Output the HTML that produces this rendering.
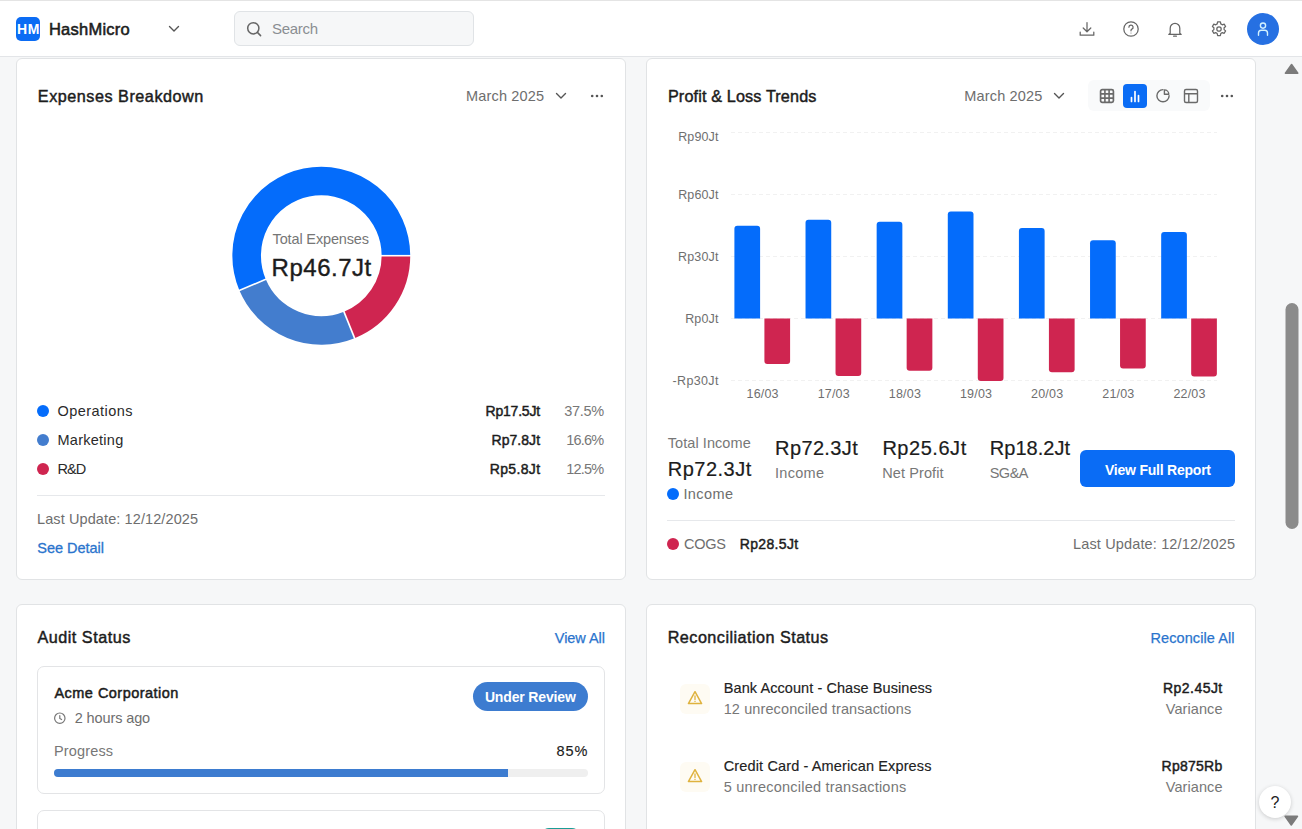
<!DOCTYPE html>
<html><head><meta charset="utf-8"><style>
html,body{margin:0;padding:0}
body{width:1302px;height:829px;overflow:hidden;position:relative;background:#f6f7f8;font-family:"Liberation Sans",sans-serif}
.t{position:absolute;white-space:nowrap}
</style></head><body>
<div style="position:absolute;left:0;top:0;width:1302px;height:56px;background:#fff;border-top:1px solid #e4e4e4;box-sizing:border-box"></div>
<div style="position:absolute;left:0;top:56px;width:1302px;height:1px;background:#e3e5e8"></div>
<div style="position:absolute;left:16px;top:17px;width:24px;height:24px;border-radius:5px;background:#0b6cf4"></div>
<div class="t" style="left:16.90px;top:21.25px;font-size:14px;line-height:17px;color:#fff;letter-spacing:0.750px;font-weight:700;">HM</div>
<div class="t" style="left:48.88px;top:19.38px;font-size:16.5px;line-height:20px;color:#1c1c1c;letter-spacing:0.250px;-webkit-text-stroke:0.55px #1c1c1c;">HashMicro</div>
<svg style="position:absolute;left:166px;top:22px" width="16" height="14"><polyline points="3.5,4.5 8,9 12.5,4.5" fill="none" stroke="#555" stroke-width="1.4" stroke-linecap="round" stroke-linejoin="round"/></svg>
<div style="position:absolute;left:234px;top:11px;width:240px;height:35px;border-radius:6px;background:#f6f7f8;border:1px solid #e0e3e6;box-sizing:border-box"></div>
<svg style="position:absolute;left:244px;top:19px" width="20" height="20"><circle cx="9.3" cy="9.3" r="5.6" fill="none" stroke="#666" stroke-width="1.5"/><line x1="13.4" y1="13.4" x2="16.6" y2="16.6" stroke="#666" stroke-width="1.5" stroke-linecap="round"/></svg>
<div class="t" style="left:272.00px;top:20.40px;font-size:15px;line-height:18px;color:#8a8e92;letter-spacing:-0.310px;">Search</div>
<svg style="position:absolute;left:1077px;top:19px" width="20" height="20"><path d="M10 3.5v9M6.2 9l3.8 3.8L13.8 9M3.2 13v3.2h13.6V13" fill="none" stroke="#666" stroke-width="1.25" stroke-linecap="round" stroke-linejoin="round"/></svg>
<svg style="position:absolute;left:1121px;top:19px" width="20" height="20"><circle cx="10" cy="10" r="7.2" fill="none" stroke="#666" stroke-width="1.25" stroke-linecap="round" stroke-linejoin="round"/><path d="M7.9 8.2a2.1 2.1 0 1 1 3 1.9c-.6.3-.9.8-.9 1.4v.3" fill="none" stroke="#666" stroke-width="1.25" stroke-linecap="round" stroke-linejoin="round"/><circle cx="10" cy="13.9" r=".5" fill="#666"/></svg>
<svg style="position:absolute;left:1165px;top:19px" width="20" height="20"><path d="M5.2 14.2V9.2a4.8 4.8 0 0 1 9.6 0v5l1.4 1.2H3.8z" fill="none" stroke="#666" stroke-width="1.25" stroke-linecap="round" stroke-linejoin="round"/><path d="M8.6 17.2h2.8" fill="none" stroke="#666" stroke-width="1.25" stroke-linecap="round" stroke-linejoin="round"/></svg>
<svg style="position:absolute;left:1209px;top:19px" width="20" height="20"><path d="M8.6 2.9h2.8l.4 2 1.5.9 1.9-.7 1.4 2.4-1.5 1.3v1.8l1.5 1.3-1.4 2.4-1.9-.7-1.5.9-.4 2H8.6l-.4-2-1.5-.9-1.9.7-1.4-2.4 1.5-1.3V8.8L3.4 7.5l1.4-2.4 1.9.7 1.5-.9z" fill="none" stroke="#666" stroke-width="1.25" stroke-linecap="round" stroke-linejoin="round"/><circle cx="10" cy="10" r="2.2" fill="none" stroke="#666" stroke-width="1.25" stroke-linecap="round" stroke-linejoin="round"/></svg>
<div style="position:absolute;left:1247px;top:13px;width:32px;height:32px;border-radius:50%;background:#2670e2"></div>
<svg style="position:absolute;left:1253px;top:19px" width="20" height="20"><circle cx="10" cy="6.6" r="2.6" fill="none" stroke="#d2f1ff" stroke-width="1.4"/><path d="M5.5 16.3v-2.3a2.8 2.8 0 0 1 2.8-2.8h3.4a2.8 2.8 0 0 1 2.8 2.8v2.3" fill="none" stroke="#d2f1ff" stroke-width="1.4" stroke-linecap="round"/></svg>
<div style="position:absolute;background:#fff;border:1px solid #e1e3e5;border-radius:6px;box-sizing:border-box;left:16px;top:58px;width:610px;height:522px"></div>
<div style="position:absolute;background:#fff;border:1px solid #e1e3e5;border-radius:6px;box-sizing:border-box;left:646px;top:58px;width:610px;height:522px"></div>
<div style="position:absolute;background:#fff;border:1px solid #e1e3e5;border-radius:6px;box-sizing:border-box;left:16px;top:604px;width:610px;height:300px"></div>
<div style="position:absolute;background:#fff;border:1px solid #e1e3e5;border-radius:6px;box-sizing:border-box;left:646px;top:604px;width:610px;height:300px"></div>
<div class="t" style="left:37.83px;top:87.18px;font-size:16.2px;line-height:19px;color:#1c1c1c;letter-spacing:0.521px;-webkit-text-stroke:0.45px #1c1c1c;">Expenses Breakdown</div>
<div class="t" style="left:466.10px;top:87.77px;font-size:14.5px;line-height:17px;color:#6e6e6e;letter-spacing:0.161px;">March 2025</div>
<svg style="position:absolute;left:553px;top:88px" width="16" height="14"><polyline points="3.5,5.6 8,10.1 12.5,5.6" fill="none" stroke="#555" stroke-width="1.4" stroke-linecap="round" stroke-linejoin="round"/></svg>
<svg style="position:absolute;left:589px;top:89px" width="16" height="14"><circle cx="3.2" cy="7" r="1.3" fill="#555"/><circle cx="8" cy="7" r="1.3" fill="#555"/><circle cx="12.8" cy="7" r="1.3" fill="#555"/></svg>
<svg style="position:absolute;left:216px;top:141px" width="210" height="230"><path d="M179.95 114.70 A74.65 74.65 0 0 1 133.26 183.91" fill="none" stroke="#cf2550" stroke-width="28.6"/><path d="M133.26 183.91 A74.65 74.65 0 0 1 36.58 143.87" fill="none" stroke="#437dce" stroke-width="28.6"/><path d="M36.58 143.87 A74.65 74.65 0 1 1 179.95 114.70" fill="none" stroke="#046cfb" stroke-width="28.6"/><line x1="164.30" y1="114.70" x2="195.80" y2="114.70" stroke="#fff" stroke-width="1.6"/><line x1="127.40" y1="169.40" x2="139.20" y2="198.61" stroke="#fff" stroke-width="1.6"/><line x1="50.99" y1="137.75" x2="21.99" y2="150.06" stroke="#fff" stroke-width="1.6"/></svg>
<div class="t" style="left:272.55px;top:231.37px;font-size:14.5px;line-height:17px;color:#767676;letter-spacing:-0.142px;">Total Expenses</div>
<div class="t" style="left:271.60px;top:253.38px;font-size:24px;line-height:29px;color:#1c1c1c;letter-spacing:0.507px;-webkit-text-stroke:0.4px #1c1c1c;">Rp46.7Jt</div>
<div style="position:absolute;left:36.8px;top:405.0px;width:12px;height:12px;border-radius:50%;background:#046cfb"></div>
<div class="t" style="left:57.50px;top:403.07px;font-size:14.5px;line-height:17px;color:#2a2a2a;letter-spacing:0.450px;">Operations</div>
<div class="t" style="left:485.52px;top:403.25px;font-size:14px;line-height:17px;color:#1c1c1c;letter-spacing:-0.214px;-webkit-text-stroke:0.45px #1c1c1c;">Rp17.5Jt</div>
<div class="t" style="left:564.20px;top:403.07px;font-size:14.5px;line-height:17px;color:#777;letter-spacing:-0.275px;">37.5%</div>
<div style="position:absolute;left:36.8px;top:434.0px;width:12px;height:12px;border-radius:50%;background:#437dce"></div>
<div class="t" style="left:57.50px;top:432.07px;font-size:14.5px;line-height:17px;color:#2a2a2a;letter-spacing:0.256px;">Marketing</div>
<div class="t" style="left:491.52px;top:432.25px;font-size:14px;line-height:17px;color:#1c1c1c;letter-spacing:0.050px;-webkit-text-stroke:0.45px #1c1c1c;">Rp7.8Jt</div>
<div class="t" style="left:566.20px;top:432.07px;font-size:14.5px;line-height:17px;color:#777;letter-spacing:-0.775px;">16.6%</div>
<div style="position:absolute;left:36.8px;top:463.0px;width:12px;height:12px;border-radius:50%;background:#cf2550"></div>
<div class="t" style="left:57.50px;top:461.07px;font-size:14.5px;line-height:17px;color:#2a2a2a;letter-spacing:-0.900px;">R&amp;D</div>
<div class="t" style="left:489.82px;top:461.25px;font-size:14px;line-height:17px;color:#1c1c1c;letter-spacing:0.333px;-webkit-text-stroke:0.45px #1c1c1c;">Rp5.8Jt</div>
<div class="t" style="left:566.20px;top:461.07px;font-size:14.5px;line-height:17px;color:#777;letter-spacing:-0.775px;">12.5%</div>
<div style="position:absolute;left:37px;top:495px;width:568px;height:1px;background:#e6e8eb"></div>
<div class="t" style="left:37.00px;top:511.47px;font-size:14.5px;line-height:17px;color:#6e6e6e;letter-spacing:0.100px;">Last Update: 12/12/2025</div>
<div class="t" style="left:37.35px;top:540.07px;font-size:14.5px;line-height:17px;color:#2a74cd;letter-spacing:-0.022px;-webkit-text-stroke:0.3px #2a74cd;">See Detail</div>
<div class="t" style="left:667.93px;top:87.18px;font-size:16.2px;line-height:19px;color:#1c1c1c;letter-spacing:0.142px;-webkit-text-stroke:0.45px #1c1c1c;">Profit &amp; Loss Trends</div>
<div class="t" style="left:964.30px;top:87.77px;font-size:14.5px;line-height:17px;color:#6e6e6e;letter-spacing:0.161px;">March 2025</div>
<svg style="position:absolute;left:1051px;top:88px" width="16" height="14"><polyline points="3.5,5.6 8,10.1 12.5,5.6" fill="none" stroke="#555" stroke-width="1.4" stroke-linecap="round" stroke-linejoin="round"/></svg>
<div style="position:absolute;left:1088px;top:80px;width:122px;height:31px;border-radius:6px;background:#f9fafb"></div>
<div style="position:absolute;left:1123px;top:84px;width:24px;height:24px;border-radius:4px;background:#0a6cf5"></div>
<svg style="position:absolute;left:1097px;top:86px" width="20" height="20"><rect x="3.6" y="3.6" width="12.8" height="12.8" rx="1.6" fill="none" stroke="#6a6a6a" stroke-width="1.7"/><path d="M7.9 3.6v12.8M12.1 3.6v12.8M3.6 7.9h12.8M3.6 12.1h12.8" fill="none" stroke="#6a6a6a" stroke-width="1.6"/></svg>
<svg style="position:absolute;left:1125px;top:86px" width="20" height="20"><path d="M6.5 15.5v-4M10 15.5V5.5M13.5 15.5v-6" fill="none" stroke="#fff" stroke-width="1.7" stroke-linecap="round"/></svg>
<svg style="position:absolute;left:1153px;top:86px" width="20" height="20"><path d="M10 3.6A6.1 6.1 0 1 0 16.1 9.7" fill="none" stroke="#6a6a6a" stroke-width="1.4" stroke-linecap="round"/><path d="M11.4 8.3V3.9A4.4 4.4 0 0 1 15.8 8.3Z" fill="none" stroke="#6a6a6a" stroke-width="1.4" stroke-linejoin="round"/></svg>
<svg style="position:absolute;left:1181px;top:86px" width="20" height="20"><rect x="3.5" y="3.5" width="13" height="13" rx="1.5" fill="none" stroke="#6a6a6a" stroke-width="1.4"/><path d="M3.5 7.8h13M7.8 7.8v8.7" fill="none" stroke="#6a6a6a" stroke-width="1.4"/></svg>
<svg style="position:absolute;left:1219px;top:89px" width="16" height="14"><circle cx="3.2" cy="7" r="1.3" fill="#555"/><circle cx="8" cy="7" r="1.3" fill="#555"/><circle cx="12.8" cy="7" r="1.3" fill="#555"/></svg>
<svg style="position:absolute;left:646px;top:120px" width="610" height="300"><line x1="85" y1="12.5" x2="571" y2="12.5" stroke="#f1f1f1" stroke-width="1" stroke-dasharray="4 3"/><line x1="85" y1="74.5" x2="571" y2="74.5" stroke="#f1f1f1" stroke-width="1" stroke-dasharray="4 3"/><line x1="85" y1="136.5" x2="571" y2="136.5" stroke="#f1f1f1" stroke-width="1" stroke-dasharray="4 3"/><line x1="85" y1="198.5" x2="571" y2="198.5" stroke="#f1f1f1" stroke-width="1" stroke-dasharray="4 3"/><line x1="85" y1="260.5" x2="571" y2="260.5" stroke="#f1f1f1" stroke-width="1" stroke-dasharray="4 3"/><path d="M88.39999999999998 198.60000000000002 V108.80000000000001 Q88.39999999999998 105.80000000000001 91.39999999999998 105.80000000000001 H111.09999999999998 Q114.09999999999998 105.80000000000001 114.09999999999998 108.80000000000001 V198.60000000000002 Z" fill="#046cfb"/><path d="M118.39999999999998 198.60000000000002 V241 Q118.39999999999998 244 121.39999999999998 244 H141.09999999999997 Q144.09999999999997 244 144.09999999999997 241 V198.60000000000002 Z" fill="#cf2550"/><path d="M159.52999999999997 198.60000000000002 V102.80000000000001 Q159.52999999999997 99.80000000000001 162.52999999999997 99.80000000000001 H182.22999999999996 Q185.22999999999996 99.80000000000001 185.22999999999996 102.80000000000001 V198.60000000000002 Z" fill="#046cfb"/><path d="M189.52999999999997 198.60000000000002 V253 Q189.52999999999997 256 192.52999999999997 256 H212.22999999999996 Q215.22999999999996 256 215.22999999999996 253 V198.60000000000002 Z" fill="#cf2550"/><path d="M230.65999999999997 198.60000000000002 V104.80000000000001 Q230.65999999999997 101.80000000000001 233.65999999999997 101.80000000000001 H253.35999999999996 Q256.35999999999996 101.80000000000001 256.35999999999996 104.80000000000001 V198.60000000000002 Z" fill="#046cfb"/><path d="M260.65999999999997 198.60000000000002 V247.7 Q260.65999999999997 250.7 263.65999999999997 250.7 H283.35999999999996 Q286.35999999999996 250.7 286.35999999999996 247.7 V198.60000000000002 Z" fill="#cf2550"/><path d="M301.78999999999996 198.60000000000002 V94.5 Q301.78999999999996 91.5 304.78999999999996 91.5 H324.48999999999995 Q327.48999999999995 91.5 327.48999999999995 94.5 V198.60000000000002 Z" fill="#046cfb"/><path d="M331.78999999999996 198.60000000000002 V258 Q331.78999999999996 261 334.78999999999996 261 H354.48999999999995 Q357.48999999999995 261 357.48999999999995 258 V198.60000000000002 Z" fill="#cf2550"/><path d="M372.91999999999996 198.60000000000002 V111 Q372.91999999999996 108 375.91999999999996 108 H395.61999999999995 Q398.61999999999995 108 398.61999999999995 111 V198.60000000000002 Z" fill="#046cfb"/><path d="M402.91999999999996 198.60000000000002 V249.3 Q402.91999999999996 252.3 405.91999999999996 252.3 H425.61999999999995 Q428.61999999999995 252.3 428.61999999999995 249.3 V198.60000000000002 Z" fill="#cf2550"/><path d="M444.04999999999995 198.60000000000002 V123.30000000000001 Q444.04999999999995 120.30000000000001 447.04999999999995 120.30000000000001 H466.74999999999994 Q469.74999999999994 120.30000000000001 469.74999999999994 123.30000000000001 V198.60000000000002 Z" fill="#046cfb"/><path d="M474.04999999999995 198.60000000000002 V245.39999999999998 Q474.04999999999995 248.39999999999998 477.04999999999995 248.39999999999998 H496.74999999999994 Q499.74999999999994 248.39999999999998 499.74999999999994 245.39999999999998 V198.60000000000002 Z" fill="#cf2550"/><path d="M515.1799999999998 198.60000000000002 V115 Q515.1799999999998 112 518.1799999999998 112 H537.8799999999999 Q540.8799999999999 112 540.8799999999999 115 V198.60000000000002 Z" fill="#046cfb"/><path d="M545.1799999999998 198.60000000000002 V253.60000000000002 Q545.1799999999998 256.6 548.1799999999998 256.6 H567.8799999999999 Q570.8799999999999 256.6 570.8799999999999 253.60000000000002 V198.60000000000002 Z" fill="#cf2550"/></svg>
<div class="t" style="left:678.20px;top:129.87px;font-size:12.5px;line-height:15px;color:#6f6f6f;letter-spacing:0.120px;">Rp90Jt</div>
<div class="t" style="left:678.20px;top:187.97px;font-size:12.5px;line-height:15px;color:#6f6f6f;letter-spacing:0.120px;">Rp60Jt</div>
<div class="t" style="left:678.00px;top:249.97px;font-size:12.5px;line-height:15px;color:#6f6f6f;letter-spacing:0.160px;">Rp30Jt</div>
<div class="t" style="left:685.20px;top:311.77px;font-size:12.5px;line-height:15px;color:#6f6f6f;letter-spacing:0.138px;">Rp0Jt</div>
<div class="t" style="left:672.60px;top:373.57px;font-size:12.5px;line-height:15px;color:#6f6f6f;letter-spacing:0.342px;">-Rp30Jt</div>
<div class="t" style="left:746.60px;top:386.77px;font-size:12.5px;line-height:15px;color:#6f6f6f;letter-spacing:0.175px;">16/03</div>
<div class="t" style="left:817.73px;top:386.77px;font-size:12.5px;line-height:15px;color:#6f6f6f;letter-spacing:0.175px;">17/03</div>
<div class="t" style="left:888.86px;top:386.77px;font-size:12.5px;line-height:15px;color:#6f6f6f;letter-spacing:0.175px;">18/03</div>
<div class="t" style="left:959.99px;top:386.77px;font-size:12.5px;line-height:15px;color:#6f6f6f;letter-spacing:0.175px;">19/03</div>
<div class="t" style="left:1031.12px;top:386.77px;font-size:12.5px;line-height:15px;color:#6f6f6f;letter-spacing:0.175px;">20/03</div>
<div class="t" style="left:1102.25px;top:386.77px;font-size:12.5px;line-height:15px;color:#6f6f6f;letter-spacing:0.175px;">21/03</div>
<div class="t" style="left:1173.38px;top:386.77px;font-size:12.5px;line-height:15px;color:#6f6f6f;letter-spacing:0.175px;">22/03</div>
<div class="t" style="left:667.70px;top:434.87px;font-size:14.5px;line-height:17px;color:#777;letter-spacing:0.073px;">Total Income</div>
<div class="t" style="left:667.80px;top:456.87px;font-size:20px;line-height:24px;color:#1c1c1c;letter-spacing:0.479px;-webkit-text-stroke:0.2px #1c1c1c;">Rp72.3Jt</div>
<div style="position:absolute;left:667px;top:488px;width:12px;height:12px;border-radius:50%;background:#046cfb"></div>
<div class="t" style="left:683.40px;top:486.07px;font-size:14.5px;line-height:17px;color:#6e6e6e;letter-spacing:0.410px;">Income</div>
<div class="t" style="left:775.10px;top:435.87px;font-size:20px;line-height:24px;color:#1c1c1c;letter-spacing:0.364px;-webkit-text-stroke:0.2px #1c1c1c;">Rp72.3Jt</div>
<div class="t" style="left:775.00px;top:464.77px;font-size:14.5px;line-height:17px;color:#777;letter-spacing:0.290px;">Income</div>
<div class="t" style="left:882.40px;top:435.87px;font-size:20px;line-height:24px;color:#1c1c1c;letter-spacing:0.536px;-webkit-text-stroke:0.2px #1c1c1c;">Rp25.6Jt</div>
<div class="t" style="left:882.30px;top:464.77px;font-size:14.5px;line-height:17px;color:#777;letter-spacing:0.094px;">Net Profit</div>
<div class="t" style="left:989.80px;top:435.87px;font-size:20px;line-height:24px;color:#1c1c1c;letter-spacing:0.036px;-webkit-text-stroke:0.2px #1c1c1c;">Rp18.2Jt</div>
<div class="t" style="left:989.70px;top:464.77px;font-size:14.5px;line-height:17px;color:#777;letter-spacing:-0.500px;">SG&amp;A</div>
<div style="position:absolute;left:1080px;top:450px;width:155px;height:37px;border-radius:6px;background:#0a6cf5"></div>
<div class="t" style="left:1105.00px;top:461.85px;font-size:14px;line-height:17px;color:#fff;letter-spacing:-0.227px;font-weight:700;">View Full Report</div>
<div style="position:absolute;left:667px;top:520px;width:568px;height:1px;background:#e6e8eb"></div>
<div style="position:absolute;left:667px;top:538px;width:12px;height:12px;border-radius:50%;background:#cf2550"></div>
<div class="t" style="left:683.90px;top:535.77px;font-size:14.5px;line-height:17px;color:#6e6e6e;letter-spacing:-0.233px;">COGS</div>
<div class="t" style="left:739.73px;top:535.95px;font-size:14px;line-height:17px;color:#1c1c1c;letter-spacing:0.357px;-webkit-text-stroke:0.45px #1c1c1c;">Rp28.5Jt</div>
<div class="t" style="left:1073.00px;top:535.77px;font-size:14.5px;line-height:17px;color:#6e6e6e;letter-spacing:0.145px;">Last Update: 12/12/2025</div>
<div class="t" style="left:37.43px;top:628.48px;font-size:16.2px;line-height:19px;color:#1c1c1c;letter-spacing:0.509px;-webkit-text-stroke:0.45px #1c1c1c;">Audit Status</div>
<div class="t" style="left:554.83px;top:630.27px;font-size:14.5px;line-height:17px;color:#2a74cd;letter-spacing:-0.064px;-webkit-text-stroke:0.25px #2a74cd;">View All</div>
<div style="position:absolute;left:37px;top:666px;width:568px;height:128px;border:1px solid #e3e4e6;border-radius:7px;box-sizing:border-box;background:#fff"></div>
<div class="t" style="left:54.45px;top:685.17px;font-size:14.5px;line-height:17px;color:#1c1c1c;letter-spacing:0.470px;-webkit-text-stroke:0.5px #1c1c1c;">Acme Corporation</div>
<svg style="position:absolute;left:52px;top:711px" width="16" height="16"><circle cx="7.8" cy="7.2" r="5.2" fill="none" stroke="#777" stroke-width="1.2"/><path d="M7.8 4.6v2.8l1.8 1.1" fill="none" stroke="#777" stroke-width="1.2" stroke-linecap="round"/></svg>
<div class="t" style="left:74.70px;top:709.77px;font-size:14.5px;line-height:17px;color:#6e6e6e;letter-spacing:-0.110px;">2 hours ago</div>
<div style="position:absolute;left:473px;top:682px;width:115px;height:29px;border-radius:15px;background:#3d7cd0"></div>
<div class="t" style="left:484.90px;top:689.15px;font-size:14px;line-height:17px;color:#fff;letter-spacing:-0.150px;font-weight:700;">Under Review</div>
<div class="t" style="left:54.00px;top:742.77px;font-size:14.5px;line-height:17px;color:#777;letter-spacing:0.143px;">Progress</div>
<div class="t" style="left:556.47px;top:743.07px;font-size:14.5px;line-height:17px;color:#1c1c1c;letter-spacing:0.925px;-webkit-text-stroke:0.15px #1c1c1c;">85%</div>
<div style="position:absolute;left:54px;top:769px;width:534px;height:8px;border-radius:4px;background:#efefef"></div>
<div style="position:absolute;left:54px;top:769px;width:454px;height:8px;border-radius:4px 0 0 4px;background:#3d7cd0"></div>
<div style="position:absolute;left:37px;top:810px;width:568px;height:60px;border:1px solid #e3e4e6;border-radius:7px;box-sizing:border-box;background:#fff"></div>
<div style="position:absolute;left:541px;top:828px;width:39px;height:20px;border-radius:8px;background:#1b9e96"></div>
<div class="t" style="left:667.73px;top:628.48px;font-size:16.2px;line-height:19px;color:#1c1c1c;letter-spacing:0.462px;-webkit-text-stroke:0.45px #1c1c1c;">Reconciliation Status</div>
<div class="t" style="left:1150.42px;top:629.97px;font-size:14.5px;line-height:17px;color:#2a74cd;letter-spacing:0.096px;-webkit-text-stroke:0.25px #2a74cd;">Reconcile All</div>
<div style="position:absolute;left:680px;top:684px;width:30px;height:30px;border-radius:6px;background:#fefbf3"></div>
<svg style="position:absolute;left:685px;top:689px" width="20" height="20"><path d="M10 2.7 L16.6 14.6 H3.4 Z" fill="none" stroke="#dfb23e" stroke-width="1.5" stroke-linejoin="round"/><path d="M10 6.9v3.6" stroke="#dfb23e" stroke-width="1.3" stroke-linecap="round"/><circle cx="10" cy="12.4" r=".7" fill="#dfb23e"/></svg>
<div class="t" style="left:723.78px;top:680.07px;font-size:14.5px;line-height:17px;color:#222;letter-spacing:0.071px;-webkit-text-stroke:0.15px #222;">Bank Account - Chase Business</div>
<div class="t" style="left:723.70px;top:700.87px;font-size:14.5px;line-height:17px;color:#777;letter-spacing:0.107px;">12 unreconciled transactions</div>
<div class="t" style="left:1162.93px;top:680.15px;font-size:14px;line-height:17px;color:#1c1c1c;letter-spacing:0.471px;-webkit-text-stroke:0.45px #1c1c1c;">Rp2.45Jt</div>
<div class="t" style="left:1165.80px;top:700.87px;font-size:14.5px;line-height:17px;color:#777;letter-spacing:0.079px;">Variance</div>
<div style="position:absolute;left:680px;top:762px;width:30px;height:30px;border-radius:6px;background:#fefbf3"></div>
<svg style="position:absolute;left:685px;top:767px" width="20" height="20"><path d="M10 2.7 L16.6 14.6 H3.4 Z" fill="none" stroke="#dfb23e" stroke-width="1.5" stroke-linejoin="round"/><path d="M10 6.9v3.6" stroke="#dfb23e" stroke-width="1.3" stroke-linecap="round"/><circle cx="10" cy="12.4" r=".7" fill="#dfb23e"/></svg>
<div class="t" style="left:723.78px;top:758.07px;font-size:14.5px;line-height:17px;color:#222;letter-spacing:0.131px;-webkit-text-stroke:0.15px #222;">Credit Card - American Express</div>
<div class="t" style="left:723.70px;top:778.87px;font-size:14.5px;line-height:17px;color:#777;letter-spacing:0.231px;">5 unreconciled transactions</div>
<div class="t" style="left:1161.62px;top:758.15px;font-size:14px;line-height:17px;color:#1c1c1c;letter-spacing:0.250px;-webkit-text-stroke:0.45px #1c1c1c;">Rp875Rb</div>
<div class="t" style="left:1165.80px;top:778.87px;font-size:14.5px;line-height:17px;color:#777;letter-spacing:0.079px;">Variance</div>
<div style="position:absolute;left:1259px;top:786px;width:32px;height:32px;border-radius:50%;background:#fff;box-shadow:0 1px 4px rgba(0,0,0,.18)"></div>
<div class="t" style="left:1270.55px;top:793.05px;font-size:16px;line-height:19px;color:#222;">?</div>
<svg style="position:absolute;left:1283px;top:57px" width="19" height="772"><path d="M8.6 7.5 L14.8 16.2 H2.4 Z" fill="#7b7b7b" stroke="#7b7b7b" stroke-width="1.5" stroke-linejoin="round" transform="translate(0,0)"/><rect x="2.5" y="246" width="13" height="226" rx="6.5" fill="#8b8b8b"/><path d="M8.6 768 L14.8 759.3 H2.4 Z" fill="#7b7b7b" stroke="#7b7b7b" stroke-width="1.5" stroke-linejoin="round" transform="translate(-0.3,0)"/></svg>
</body></html>
